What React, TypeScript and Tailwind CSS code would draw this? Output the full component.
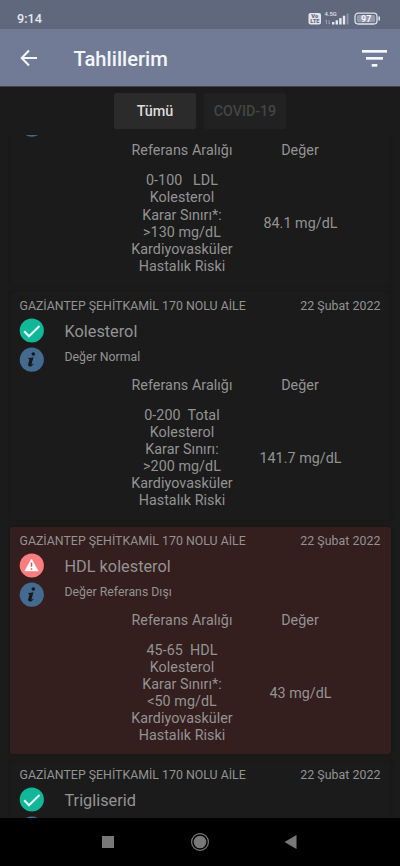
type Result = {
  clinic: string;
  date: string;
  name: string;
  status: string;
  normal: boolean;
  lines: string[];
  value: string;
};

const CLINIC = "GAZİANTEP ŞEHİTKAMİL 170 NOLU AİLE";
const DATE = "22 Şubat 2022";

const results: Result[] = [
  {
    clinic: "",
    date: "",
    name: "",
    status: "",
    normal: true,
    lines: ["0-100   LDL", "Kolesterol", "Karar Sınırı*:", ">130 mg/dL", "Kardiyovasküler", "Hastalık Riski"],
    value: "84.1 mg/dL",
  },
  {
    clinic: CLINIC,
    date: DATE,
    name: "Kolesterol",
    status: "Değer Normal",
    normal: true,
    lines: ["0-200  Total", "Kolesterol", "Karar Sınırı:", ">200 mg/dL", "Kardiyovasküler", "Hastalık Riski"],
    value: "141.7 mg/dL",
  },
  {
    clinic: CLINIC,
    date: DATE,
    name: "HDL kolesterol",
    status: "Değer Referans Dışı",
    normal: false,
    lines: ["45-65  HDL", "Kolesterol", "Karar Sınırı*:", "<50 mg/dL", "Kardiyovasküler", "Hastalık Riski"],
    value: "43 mg/dL",
  },
  {
    clinic: CLINIC,
    date: DATE,
    name: "Trigliserid",
    status: "",
    normal: true,
    lines: [],
    value: "",
  },
];

function StatusIcon({ normal }: { normal: boolean }) {
  if (normal) {
    return (
      <svg className="w-[25px] h-[25px]" viewBox="0 0 25 25" fill="none">
        <circle cx="12.8" cy="12.5" r="12.1" fill="#10b899" />
        <path d="M5.2 13.2l4.8 5.1L20.5 8" stroke="#e8fffa" strokeWidth="2" />
      </svg>
    );
  }
  return (
    <svg className="w-[25px] h-[25px]" viewBox="0 0 25 25" fill="none">
      <circle cx="12.8" cy="12.5" r="12.1" fill="#fb7d7f" />
      <path d="M12.5 6l6.7 11.9H5.8z" fill="#fff" stroke="#fff" strokeWidth="0.5" strokeLinejoin="round" />
      <path d="M12.5 9.5v4.3M12.5 15.2v1.5" stroke="#d4585c" strokeWidth="1.5" />
    </svg>
  );
}

function InfoIcon() {
  return (
    <svg className="w-[25px] h-[25px]" viewBox="0 0 25 25">
      <circle cx="12.8" cy="12.7" r="12.1" fill="#436b8f" />
      <circle cx="14.3" cy="7" r="1.8" fill="#16191d" />
      <path
        d="M9.3 11.1c1.8-.1 3.6-.4 5.2-.9l-1.9 6.8c-.2.8.2 1 .7.5l1-1 .5.4c-1.2 1.7-2.5 2.6-3.8 2.6-1.6 0-2.2-1-1.8-2.4l1.1-4c.2-.9-.1-1.2-1.1-1.2z"
        fill="#16191d"
      />
    </svg>
  );
}

function ResultCard({ result }: { result: Result }) {
  return (
    <article
      className={`h-[227.5px] shrink-0 rounded-[3px] px-[10px] pt-[6px] text-[#939393] ${
        result.normal ? "bg-[#1b1b1b] shadow-[0_0_3px_#171717]" : "bg-[#341e1e] shadow-[0_0_3px_#171414]"
      }`}
    >
      <div className="flex justify-between h-4 leading-4 text-[12.35px] whitespace-nowrap">
        <span>{result.clinic}</span>
        <span className="tracking-[0.05px]">{result.date}</span>
      </div>
      <div className="flex gap-[20px] mt-[4px]">
        <div className="flex flex-col gap-[4px] -ml-[0.5px] mr-[0.5px]">
          <StatusIcon normal={result.normal} />
          <InfoIcon />
        </div>
        <div>
          <h2 className="h-[26px] leading-[27px] text-[16.3px]">{result.name}</h2>
          <p className="h-[28px] leading-[26px] text-[12.3px]">{result.status}</p>
        </div>
      </div>
      {result.lines.length > 0 && (
        <div className="grid grid-cols-[118px_118px] ml-[103.5px] mt-[3px] text-center text-[14.3px] tracking-[0.05px]">
          <span className="h-[20px] leading-[20px]">Referans Aralığı</span>
          <span className="h-[20px] leading-[20px]">Değer</span>
          <div className="mt-[12px] leading-[17.1px] whitespace-pre">
            {result.lines.map((line) => (
              <p key={line}>{line}</p>
            ))}
          </div>
          <span className="mt-[13px] ml-px self-center">{result.value}</span>
        </div>
      )}
    </article>
  );
}

function StatusBar() {
  return (
    <div className="flex items-end justify-between h-[29px] pl-[17px] pr-[19px] pb-[3px] bg-[#60687e] text-[#e6e8ef]">
      <span className="h-[15px] leading-4 text-[12.6px] font-medium">9:14</span>
      <svg className="w-[73px] h-[14px] mb-[1px]" viewBox="0 0 73 14" fontFamily="Roboto, sans-serif">
        <rect x="0.5" y="2" width="12.5" height="11.5" rx="2" fill="#e3e5eb" />
        <text x="6.7" y="7.4" fontSize="5.7" fontWeight="900" textAnchor="middle" fill="#60687e">Vo</text>
        <text x="6.8" y="12.4" fontSize="5.7" fontWeight="900" textAnchor="middle" fill="#60687e">LTE</text>
        <text x="16.5" y="5.4" fontSize="5.8" fontWeight="500" fill="#e0e2e9">4.5G</text>
        <path d="M18.5 13V9M17.3 10.3l1.2-1.4M21 9v4M22.2 11.7L21 13.1" stroke="#a9aebc" strokeWidth="0.8" />
        <g fill="#e6e8ef">
          <rect x="24" y="11" width="2.4" height="2.5" />
          <rect x="27.6" y="9.3" width="2.4" height="4.2" />
          <rect x="31.2" y="7.1" width="2.4" height="6.4" />
          <rect x="34.8" y="4.7" width="2.4" height="8.8" />
          <rect x="38.6" y="2.5" width="2" height="11" fill="#8c92a3" />
        </g>
        <rect x="47" y="2.2" width="22" height="10.8" rx="3.2" fill="none" stroke="#e0e2e9" strokeWidth="1.3" />
        <rect x="48.8" y="4" width="18.4" height="7.2" rx="1.5" fill="#949aaa" />
        <path d="M71.2 5.5v4" stroke="#e0e2e9" strokeWidth="1.6" />
        <text x="58.2" y="10.8" fontSize="9" fontWeight="700" textAnchor="middle" fill="#f4f5f8">97</text>
      </svg>
    </div>
  );
}

function Header() {
  return (
    <header className="flex items-center h-[58px] pl-[20px] pr-[13px] bg-[#717b95] border-b border-[#3c4356] text-[#f3f6fb]">
      <svg className="w-[18px] h-[18px]" viewBox="0 0 18 18" fill="none" stroke="currentColor" strokeWidth="2">
        <path d="M17 9H2M9 1.5L1.7 9 9 16.5" />
      </svg>
      <h1 className="ml-[35.5px] mt-[3px] text-[20.2px] leading-6 font-medium">Tahlillerim</h1>
      <svg className="ml-auto w-[25px] h-[18px]" viewBox="0 0 25 18" fill="currentColor">
        <rect x="0" y="1" width="25" height="2.7" />
        <rect x="4" y="8" width="17" height="2.7" />
        <rect x="9.7" y="15" width="5.6" height="2.7" />
      </svg>
    </header>
  );
}

export default function App() {
  return (
    <div className="flex flex-col w-full h-[866px] overflow-hidden bg-[#1b1b1b] font-[Roboto,sans-serif]">
      <StatusBar />
      <Header />
      <div className="flex justify-center gap-[8px] h-[48px] pt-[6px] shrink-0">
        <button className="w-[82px] h-[36px] pt-[2px] rounded-[2px] bg-[#2b2b2b] text-[#dddddb] text-[14.4px] font-medium">
          Tümü
        </button>
        <button className="w-[82px] h-[36px] pt-[2px] rounded-[2px] bg-[#212121] text-[#454545] text-[14.2px] font-medium">
          COVID-19
        </button>
      </div>
      <main className="flex-1 min-h-0 overflow-hidden px-[9.5px]">
        <div className="flex flex-col gap-[7.2px] -mt-[77.7px]">
          {results.map((result, i) => (
            <ResultCard key={i} result={result} />
          ))}
        </div>
      </main>
      <nav className="flex items-center justify-center h-[48px] shrink-0 bg-black">
        <svg className="w-[200px] h-[20px]" viewBox="0 0 200 20" fill="#787878">
          <rect x="2" y="4" width="12" height="12" />
          <circle cx="100" cy="10" r="6.3" />
          <circle cx="100" cy="10" r="8.4" fill="none" stroke="#787878" strokeWidth="1.2" />
          <path d="M184.5 10l12-7v14z" />
        </svg>
      </nav>
    </div>
  );
}
